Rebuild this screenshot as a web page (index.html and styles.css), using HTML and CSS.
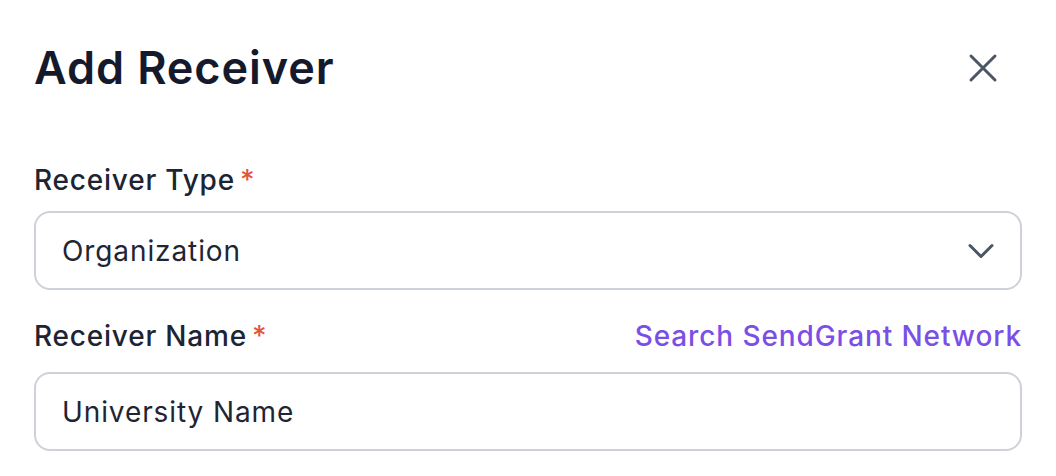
FILE: index.html
```html
<!DOCTYPE html>
<html>
<head>
<meta charset="utf-8">
<link rel="stylesheet" href="styles.css">
</head>
<body>
<div class="modal">
  <div class="header">
    <h1 class="title">Add Receiver</h1>
    <button class="close" aria-label="Close">
      <svg width="30" height="30" viewBox="0 0 30 30" fill="none" stroke="#4b5563" stroke-width="3" stroke-linecap="round"><path d="M3 3L27 27M27 3L3 27"/></svg>
    </button>
  </div>
  <div class="field">
    <div class="label-row">
      <label class="label">Receiver Type<span class="req">*</span></label>
    </div>
    <div class="input select">
      <span class="value">Organization</span>
      <svg class="chev" width="26" height="16" viewBox="0 0 26 16" fill="none" stroke="#4b5563" stroke-width="3" stroke-linecap="round" stroke-linejoin="round"><path d="M2 2.5L13 13.5L24 2.5"/></svg>
    </div>
  </div>
  <div class="field field-name">
    <div class="label-row">
      <label class="label">Receiver Name<span class="req">*</span></label>
      <a class="link" href="#">Search SendGrant Network</a>
    </div>
    <div class="input">
      <span class="value">University Name</span>
    </div>
  </div>
</div>
</body>
</html>
```
FILE: styles.css
```css
* { box-sizing: border-box; }
html, body { margin: 0; background: #ffffff; }
body { font-family: Inter, "Noto Sans", sans-serif; color: #101828; }
.modal { padding: 36px 34px 0 34px; }
.header { display: flex; justify-content: space-between; align-items: center; height: 64px; margin-bottom: 62px; }
.title { margin: 0; font-size: 45px; font-weight: 600; line-height: 64px; color: #141a2b; letter-spacing: 0.9px; }
.close { border: 0; background: none; padding: 0; margin-right: 24px; width: 30px; height: 30px; display: flex; }
.field { display: flex; flex-direction: column; }
.field-name { margin-top: 28px; }
.label-row { display: flex; justify-content: space-between; align-items: center; height: 36px; margin-bottom: 13px; }
.field-name .label-row { margin-bottom: 18px; }
.label { font-size: 28px; font-weight: 500; color: #1d2433; letter-spacing: 0.8px; }
.req { color: #e5533d; margin-left: 5px; }
.link { font-size: 28px; font-weight: 500; color: #7b4fe6; text-decoration: none; letter-spacing: 0.9px; }
.input { height: 79px; border: 2px solid #cdd1d8; border-radius: 16px; display: flex; align-items: center; padding: 0 26px 0 26px; justify-content: space-between; }
.value { font-size: 28px; color: #1f2533; letter-spacing: 0.9px; }
```
